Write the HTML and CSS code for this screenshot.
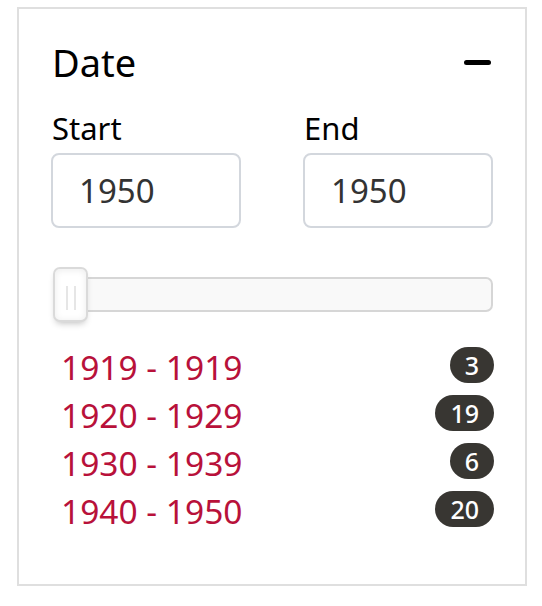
FILE: index.html
```html
<!DOCTYPE html>
<html>
<head>
<meta charset="utf-8">
<link rel="stylesheet" href="styles.css">
</head>
<body>
<div class="card">
  <div class="card-header">
    <h2 class="title">Date</h2>
    <span class="collapse" aria-label="collapse"></span>
  </div>
  <div class="range-inputs">
    <label class="field">
      <span class="field-label">Start</span>
      <input class="field-input" type="text" value="1950">
    </label>
    <label class="field">
      <span class="field-label">End</span>
      <input class="field-input" type="text" value="1950">
    </label>
  </div>
  <div class="slider">
    <div class="slider-track"></div>
    <div class="slider-handle"></div>
  </div>
  <ul class="facets">
    <li class="facet"><a class="facet-link" href="#">1919 - 1919</a><span class="badge">3</span></li>
    <li class="facet"><a class="facet-link" href="#">1920 - 1929</a><span class="badge">19</span></li>
    <li class="facet"><a class="facet-link" href="#">1930 - 1939</a><span class="badge">6</span></li>
    <li class="facet"><a class="facet-link" href="#">1940 - 1950</a><span class="badge">20</span></li>
  </ul>
</div>
</body>
</html>
```
FILE: styles.css
```css
html, body {
  margin: 0;
  padding: 0;
  background: #fff;
}
body {
  font-family: "Noto Sans", "Open Sans", sans-serif;
  color: #000;
}
.card {
  box-sizing: border-box;
  margin: 7px 0 0 17px;
  width: 510px;
  height: 579px;
  border: 2px solid #dfdfdf;
  padding: 28px 32px 0 32px;
}
.card-header {
  display: flex;
  align-items: center;
  justify-content: space-between;
  height: 50px;
}
.title {
  margin: 0;
  font-size: 38px;
  font-weight: 400;
  line-height: 50px;
  padding-left: 1px;
}
.collapse {
  display: block;
  width: 27px;
  height: 5px;
  border-radius: 3px;
  background: #000;
  margin-right: 2px;
  margin-top: 1px;
}
.range-inputs {
  display: grid;
  grid-template-columns: 190px 190px;
  justify-content: space-between;
  margin-top: 23px;
}
.field {
  display: flex;
  flex-direction: column;
}
.field-label {
  font-size: 31px;
  line-height: 36px;
  padding-left: 1px;
  margin-bottom: 7px;
}
.field-input {
  box-sizing: border-box;
  width: 190px;
  height: 75px;
  border: 2px solid #d3d7dd;
  border-radius: 8px;
  padding: 0 0 0 26px;
  font-family: inherit;
  font-size: 33px;
  color: #333;
  outline: none;
}
.slider {
  position: relative;
  margin-top: 39px;
  height: 55px;
}
.slider-track {
  position: absolute;
  left: 2px;
  right: 0;
  top: 10px;
  height: 35px;
  box-sizing: border-box;
  border: 2px solid #d6d6d6;
  border-radius: 7px;
  background: #f9f9f9;
}
.slider-handle {
  position: absolute;
  left: 2px;
  top: 0;
  width: 35px;
  height: 55px;
  box-sizing: border-box;
  border: 2px solid #dadada;
  border-radius: 7px;
  background: #fff;
  box-shadow: inset 0 0 1px #fff, inset 0 1px 7px #ebebeb, 0 4px 7px -3px #bbb;
}
.slider-handle::before,
.slider-handle::after {
  content: "";
  position: absolute;
  top: 17px;
  width: 2px;
  height: 24px;
  background: #e6e6e6;
}
.slider-handle::before { left: 11px; }
.slider-handle::after { left: 19px; }
.facets {
  list-style: none;
  margin: 21px 0 0 0;
  padding: 0;
}
.facet {
  display: flex;
  align-items: center;
  justify-content: space-between;
  height: 48px;
  padding-left: 10px;
}
.facet-link {
  color: #b8113a;
  text-decoration: none;
  font-size: 33.5px;
  line-height: 48px;
}
.badge {
  box-sizing: border-box;
  min-width: 43px;
  height: 36px;
  padding: 0 15px;
  border-radius: 18px;
  background: #383632;
  color: #fff;
  font-size: 25px;
  font-weight: 500;
  line-height: 36px;
  text-align: center;
  margin-right: -1px;
  margin-bottom: 4px;
}
```
